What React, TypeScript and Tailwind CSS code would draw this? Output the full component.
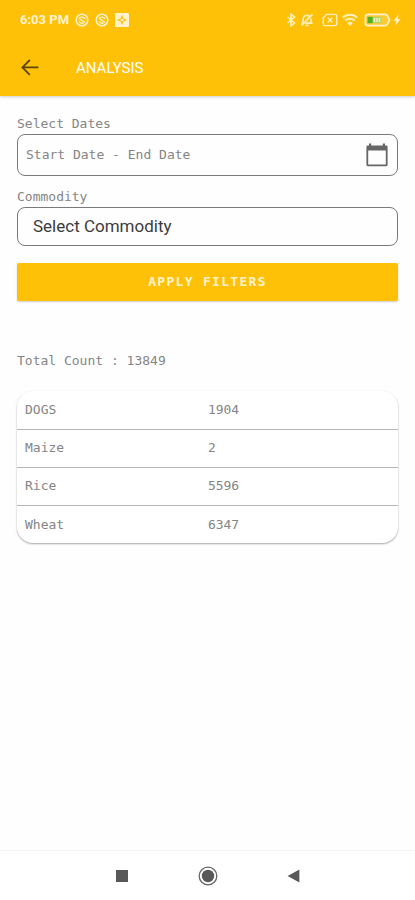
import * as React from "react"

const rows = [
  { commodity: "DOGS", count: 1904 },
  { commodity: "Maize", count: 2 },
  { commodity: "Rice", count: 5596 },
  { commodity: "Wheat", count: 6347 },
]

function ChatBadgeIcon() {
  return (
    <svg viewBox="0 0 14 14" className="size-3.5" fill="none" stroke="#fff3cf">
      <circle cx="7" cy="7" r="5.8" strokeWidth="1.5" />
      <path d="M4 5.4C5.4 3.6 8.6 3.6 10 5.8M4 5.4l6 4M4 8.2c.8 1.6 2.6 2.4 4.4 1.8" strokeWidth="1.4" />
    </svg>
  )
}

function StatusBar() {
  return (
    <div className="flex h-10 items-center justify-between pr-3.5 pl-5 text-[#fff3cf]">
      <div className="flex items-center gap-1.5">
        <span className="text-[13px] leading-5 font-bold">6:03 PM</span>
        <ChatBadgeIcon />
        <ChatBadgeIcon />
        <svg viewBox="0 0 14 14" className="size-3.5">
          <rect width="14" height="14" rx="1.5" fill="#fff3cf" />
          <path
            d="M7 1.8 8.6 5.4 12.2 7 8.6 8.6 7 12.2 5.4 8.6 1.8 7l3.6-1.6Z"
            fill="#ffc107"
          />
          <circle cx="7" cy="7" r="1.5" fill="#fff3cf" />
        </svg>
      </div>

      <div className="flex items-center gap-1">
        <svg viewBox="0 0 10 14" className="h-3.5 w-2.5" fill="none" stroke="#fff0bd" strokeWidth="1.6">
          <path d="m1.5 4 7 6L5 12.8V1.2L8.5 4l-7 6" />
        </svg>
        <svg viewBox="0 0 14 14" className="size-3.5" fill="none" stroke="#fff0bd" strokeWidth="1.7">
          <path d="M3 10.2V6.4a4 4 0 0 1 6.6-3M11 5.4v4.8H5.4M1.4 10.2H3M11 10.2h1.6M5.6 12.4h2.8M1.6 12.4 12.4 1.4" />
        </svg>
        <svg viewBox="0 0 16 14" className="ml-1 h-3.5 w-4" fill="none" stroke="#fff0bd" strokeWidth="1.4">
          <path d="M4.6 1.4h8.2a2 2 0 0 1 2 2v7.2a2 2 0 0 1-2 2H3.2a2 2 0 0 1-2-2V4.8Z" />
          <path d="m5.8 4.8 4.6 4.6M10.4 4.8 5.8 9.4" />
        </svg>
        <svg viewBox="0 0 16 14" className="h-3.5 w-4" fill="none" stroke="#fff0bd" strokeWidth="2">
          <path d="M.8 4.6a10.4 10.4 0 0 1 14.4 0M3.2 7.6a7 7 0 0 1 9.6 0" />
          <path d="M5.2 10a4 4 0 0 1 5.6 0L8 13Z" fill="#fff0bd" stroke="none" />
        </svg>
        <svg viewBox="0 0 27 14" className="ml-0.5 h-3.5 w-[27px]">
          <path
            d="M3.6 1.4h17.6c1.2 0 2 .8 2.4 1.8l2 3.8-2 3.8c-.4 1-1.2 1.8-2.4 1.8H3.6a2.2 2.2 0 0 1-2.2-2.2V3.6a2.2 2.2 0 0 1 2.2-2.2Z"
            fill="#ffc933"
            stroke="#fff3cf"
            strokeWidth="1.7"
          />
          <rect x="3.6" y="3.8" width="14" height="6.4" fill="#b5d468" />
          <rect x="3.6" y="3.8" width="5" height="6.4" fill="#52b01e" />
          <path d="M10.5 5v4M13 5v4M15.5 5v4" stroke="#fff3cf" strokeWidth="1.3" />
        </svg>
        <svg viewBox="0 0 8 14" className="-ml-0.5 h-3.5 w-2">
          <path d="M5.6 1.6.6 7.8h2.8l-1 4.8 5.2-6.6H4.6Z" fill="#fff3cf" />
        </svg>
      </div>
    </div>
  )
}

function Toolbar() {
  return (
    <div className="flex h-14 items-center gap-9 pl-5">
      <button type="button" aria-label="Back">
        <svg viewBox="0 0 20 20" className="size-5" fill="none" stroke="#5c4708" strokeWidth="1.8">
          <path d="M18.4 9.4H2.6M9.8 2 2.4 9.4l7.4 7.4" />
        </svg>
      </button>
      <h1 className="text-[15px] leading-5 text-white">ANALYSIS</h1>
    </div>
  )
}

function FilterForm() {
  return (
    <form onSubmit={(event) => event.preventDefault()}>
      <label htmlFor="dates" className="block leading-5">
        Select Dates
      </label>
      <div className="flex h-[42px] items-center rounded-lg border border-[#7a7a7a] px-2">
        <input
          id="dates"
          readOnly
          placeholder="Start Date - End Date"
          className="min-w-0 flex-1 bg-transparent outline-none placeholder:text-[#858585]"
        />
        <button type="button" aria-label="Open calendar">
          <svg viewBox="0 0 24 24" className="size-6">
            <path
              d="M4 .4h2.2v2h11.6v-2H20v2h1.2c.8 0 1.4.6 1.4 1.4v18c0 .8-.6 1.4-1.4 1.4H2.8c-.8 0-1.4-.6-1.4-1.4v-18c0-.8.6-1.4 1.4-1.4H4ZM3.2 7.6v13.8h17.6V7.6Z"
              fill="#666"
            />
          </svg>
        </button>
      </div>

      <label htmlFor="commodity" className="mt-[11px] block leading-5">
        Commodity
      </label>
      <select
        id="commodity"
        className="block h-[39px] w-full appearance-none rounded-lg border border-[#7a7a7a] bg-transparent px-[15px] font-['Roboto',sans-serif] text-[17px] font-normal text-[#3c3c3c] outline-none"
      >
        <option>Select Commodity</option>
      </select>

      <button
        type="submit"
        className="mt-[17px] block h-[38px] w-full rounded-xs bg-[#ffc107] font-bold tracking-widest text-[#fff3cf] shadow-[0_1px_2px_rgba(0,0,0,0.2)]"
      >
        APPLY FILTERS
      </button>
    </form>
  )
}

function CountTable() {
  return (
    <div className="mt-5 overflow-hidden rounded-2xl bg-white shadow-[0_1px_2px_rgba(0,0,0,0.35)]">
      <table className="w-full table-fixed border-collapse">
        <tbody>
          {rows.map((row) => (
            <tr key={row.commodity} className="h-[38px] border-b border-[#b5b5b5] last:border-b-0">
              <td className="w-[48%] pl-2">{row.commodity}</td>
              <td className="pl-2">{row.count}</td>
            </tr>
          ))}
        </tbody>
      </table>
    </div>
  )
}

function NavigationBar() {
  return (
    <nav className="flex h-[50px] items-center justify-center gap-[66px] border-t border-[#f3f3f3] bg-white">
      <button type="button" aria-label="Recent apps">
        <svg viewBox="0 0 20 20" className="size-5">
          <rect x="4" y="4" width="12" height="12" fill="#585858" />
        </svg>
      </button>
      <button type="button" aria-label="Home">
        <svg viewBox="0 0 20 20" className="size-5">
          <circle cx="10" cy="10" r="8.8" fill="none" stroke="#666" strokeWidth="1.3" />
          <circle cx="10" cy="10" r="6.2" fill="#585858" />
        </svg>
      </button>
      <button type="button" aria-label="Back to previous screen">
        <svg viewBox="0 0 20 20" className="size-5">
          <path d="M3.6 10 15.4 3.4v13.2Z" fill="#585858" />
        </svg>
      </button>
    </nav>
  )
}

export default function App() {
  return (
    <div className="flex min-h-screen flex-col bg-[#fefefe] font-['Roboto',sans-serif]">
      <header className="bg-[#ffc107] shadow-[0_1px_3px_rgba(0,0,0,0.2)]">
        <StatusBar />
        <Toolbar />
      </header>
      <main className="flex-1 px-[17px] pt-[18px] font-['DejaVu_Sans_Mono',monospace] text-[13px] text-[#858585]">
        <FilterForm />
        <p className="mt-[50px] leading-5">Total Count : 13849</p>
        <CountTable />
      </main>
      <NavigationBar />
    </div>
  )
}
